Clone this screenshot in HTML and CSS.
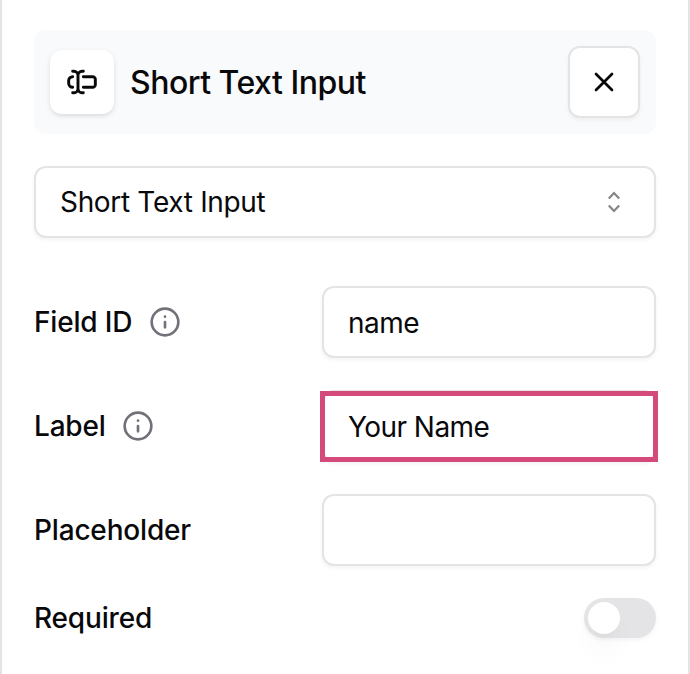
FILE: index.html
```html
<!DOCTYPE html>
<html lang="en">
<head>
<meta charset="utf-8">
<title>Field settings</title>
<link rel="stylesheet" href="styles.css">
</head>
<body>
<main class="panel">
  <header class="header">
    <span class="type-icon">
      <svg width="32" height="32" viewBox="0 0 24 24"><path d="M5 4h1a3 3 0 0 1 3 3 3 3 0 0 1 3-3h1M13 20h-1a3 3 0 0 1-3-3 3 3 0 0 1-3 3H5M5 16a3 3 0 0 1-3-3v-2a3 3 0 0 1 3-3M13 8h7a2 2 0 0 1 2 2v4a2 2 0 0 1-2 2h-7M9 7v10"/></svg>
    </span>
    <h1 class="title">Short Text Input</h1>
    <button class="close" aria-label="Close"><svg width="32" height="32" viewBox="0 0 24 24"><path d="M18 6 6 18M6 6l12 12"/></svg></button>
  </header>
  <button class="select"><span>Short Text Input</span>
    <svg width="32" height="32" viewBox="0 0 32 32"><path d="m10.8 12.4 5.2-5.3 5.2 5.3M10.8 19.6l5.2 5.3 5.2-5.3"/></svg>
  </button>
  <div class="row">
    <label class="label" for="field">Field ID</label>
    <svg class="info" width="32" height="32" viewBox="0 0 24 24"><circle cx="12" cy="12" r="10"/><path d="M12 16v-4M12 8h.01"/></svg>
    <span class="field"><input id="field" class="input" value="name"></span>
  </div>
  <div class="row">
    <label class="label" for="label">Label</label>
    <svg class="info" width="32" height="32" viewBox="0 0 24 24"><circle cx="12" cy="12" r="10"/><path d="M12 16v-4M12 8h.01"/></svg>
    <span class="field marked"><input id="label" class="input" value="Your Name"></span>
  </div>
  <div class="row">
    <label class="label" for="placeholder">Placeholder</label>
    <span class="field"><input id="placeholder" class="input"></span>
  </div>
  <div class="row required">
    <span class="label">Required</span>
    <span class="switch" role="switch" aria-checked="false"><span class="thumb"></span></span>
  </div>
</main>
</body>
</html>
```
FILE: styles.css
```css
* { box-sizing: border-box; }
body { margin: 0; background: #fff; color: #09090b; font-family: Inter, sans-serif; }
svg { display: block; flex: none; fill: none; stroke: currentColor; stroke-width: 2; stroke-linecap: round; stroke-linejoin: round; }
button, input { font: inherit; color: inherit; margin: 0; }
.panel { height: 674px; padding: 30px 32px 0; border: solid #e4e4e4; border-width: 0 2px; overflow: hidden; }
.header { display: flex; align-items: center; height: 104px; padding: 0 16px; border-radius: 12px; background: #f9fafc; }
.type-icon { display: grid; place-items: center; width: 64px; height: 64px; border-radius: 12px; background: #fff; box-shadow: 0 2px 6px #00000014, 0 2px 4px -1px #00000014; }
.type-icon svg { stroke-width: 2.2; }
.title { margin: 0 auto 0 16px; padding-top: 2px; font-size: 32px; font-weight: 500; line-height: 40px; letter-spacing: -.5px; }
.close { display: grid; place-items: center; width: 72px; height: 72px; padding: 0; border: 2px solid #e4e4e4; border-radius: 12px; background: #fff; box-shadow: 0 2px 4px #0000000d; }
.select { display: flex; align-items: center; justify-content: space-between; width: 100%; height: 72px; margin: 32px 0 48px; padding: 0 24px; border: 2px solid #e4e4e4; border-radius: 12px; background: #fff; box-shadow: 0 2px 4px #0000000d; font-size: 28px; letter-spacing: -.33px; }
.select svg { color: #848486; stroke-width: 2.2; stroke-linecap: butt; stroke-linejoin: miter; }
.row { display: flex; align-items: center; height: 72px; margin-bottom: 32px; }
.label { font-size: 28px; font-weight: 500; line-height: 28px; letter-spacing: -.18px; }
.info { margin-left: 16.5px; color: #71717a; }
.field { position: relative; display: flex; width: 334px; margin-left: auto; }
.input { width: 100%; height: 72px; padding: 2px 24px 0; border: 2px solid #e4e4e4; border-radius: 12px; background: #fff; box-shadow: 0 2px 4px #0000000d; font-size: 28px; letter-spacing: -.55px; }
.marked::after { content: ""; position: absolute; inset: 1px -2px 0; border: 5px solid #d44a7a; pointer-events: none; }
.required { height: 40px; }
.switch { width: 72px; height: 40px; margin-left: auto; padding: 4px; border-radius: 20px; background: #e4e4e7; box-shadow: 0 2px 4px #0000000d; }
.thumb { display: block; width: 32px; height: 32px; border-radius: 50%; background: #fff; box-shadow: 0 20px 30px -6px #00000012, 0 8px 12px -8px #0000000d; }
```
